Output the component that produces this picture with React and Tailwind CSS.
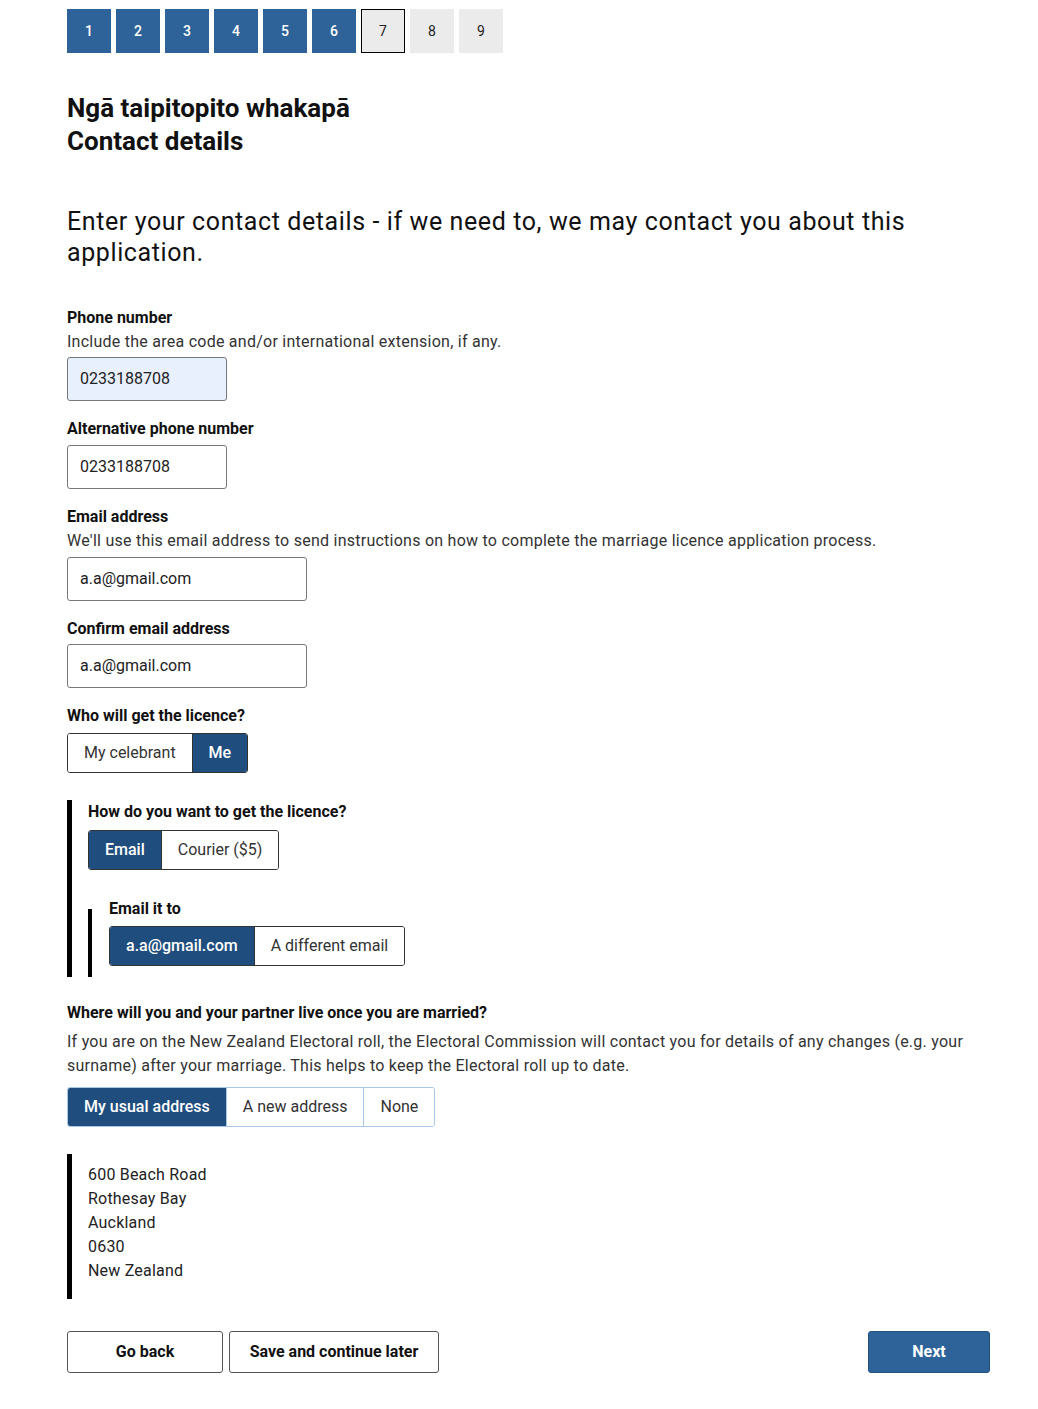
import React from 'react';
import { clsx } from 'clsx';

const font = { fontFamily: 'Roboto, "Noto Sans", sans-serif' };

function Steps() {
    const steps = [1, 2, 3, 4, 5, 6, 7, 8, 9];
    return (
        <div className="flex gap-[5px] pt-[9px]">
            {steps.map(n => (
                <div
                    key={n}
                    className={clsx(
                        'w-[44px] h-[44px] flex items-center justify-center text-[14px]',
                        n < 7 && 'bg-[#2e6399] text-white font-medium',
                        n === 7 && 'bg-[#ebebeb] border border-black text-[#222]',
                        n > 7 && 'bg-[#ebebeb] text-[#222]'
                    )}
                >
                    {n}
                </div>
            ))}
        </div>
    );
}

function Label({ children, className }) {
    return <div className={clsx('text-[16px] font-bold text-[#111] leading-[24px]', className)}>{children}</div>;
}

function Hint({ children }) {
    return <div className="text-[16px] text-[#333] leading-[24px] tracking-[0.25px]">{children}</div>;
}

function Input({ value, width, autofill }) {
    return (
        <div
            className={clsx(
                'h-[44px] border border-[#777] rounded-[3px] flex items-center px-3 text-[16px] text-[#222]',
                autofill ? 'bg-[#e8f0fe]' : 'bg-white'
            )}
            style={{ width }}
        >
            {value}
        </div>
    );
}

function Toggle({ options, selected, light }) {
    return (
        <div
            className={clsx(
                'inline-flex h-[40px] rounded-[3px] border overflow-hidden',
                light ? 'border-[#a8c6e6]' : 'border-[#333]'
            )}
        >
            {options.map((o, i) => (
                <div
                    key={o}
                    className={clsx(
                        'px-4 flex items-center text-[16px]',
                        i === selected ? 'bg-[#1f4e7e] text-white font-medium' : 'bg-white text-[#333]',
                        i > 0 && (light ? 'border-l border-[#a8c6e6]' : 'border-l border-[#333]')
                    )}
                >
                    {o}
                </div>
            ))}
        </div>
    );
}

export default function App() {
    return (
        <div className="bg-white min-h-[1409px] w-[1038px] pl-[67px] pr-[48px]" style={font}>
            <Steps />

            <h1 className="mt-[39px] text-[26px] font-bold leading-[33px] text-[#111]">
                Ngā taipitopito whakapā
                <br />
                Contact details
            </h1>

            <p className="mt-[48px] text-[25px] leading-[31px] text-[#111] tracking-[0.6px]">
                Enter your contact details - if we need to, we may contact you about this application.
            </p>

            <Label className="mt-[38px]">Phone number</Label>
            <Hint>Include the area code and/or international extension, if any.</Hint>
            <div className="mt-[3px]">
                <Input value="0233188708" width={160} autofill />
            </div>

            <Label className="mt-[16px]">Alternative phone number</Label>
            <div className="mt-[4px]">
                <Input value="0233188708" width={160} />
            </div>

            <Label className="mt-[16px]">Email address</Label>
            <Hint>We'll use this email address to send instructions on how to complete the marriage licence application process.</Hint>
            <div className="mt-[4px]">
                <Input value="a.a@gmail.com" width={240} />
            </div>

            <Label className="mt-[16px]">Confirm email address</Label>
            <div className="mt-[3px]">
                <Input value="a.a@gmail.com" width={240} />
            </div>

            <Label className="mt-[16px]">Who will get the licence?</Label>
            <div className="mt-[5px]">
                <Toggle options={['My celebrant', 'Me']} selected={1} />
            </div>

            <div className="mt-[27px] border-l-[5px] border-black pl-[16px] flex flex-col">
                <Label>How do you want to get the licence?</Label>
                <div className="mt-[6px]">
                    <Toggle options={['Email', 'Courier ($5)']} selected={0} />
                </div>
                <div className="mt-[39px] border-l-[4px] border-black pl-[17px] pb-[11px]">
                    <Label className="-mt-[12px]">Email it to</Label>
                    <div className="mt-[5px]">
                        <Toggle options={['a.a@gmail.com', 'A different email']} selected={0} />
                    </div>
                </div>
            </div>

            <Label className="mt-[24px]">Where will you and your partner live once you are married?</Label>
            <div className="mt-[5px]">
                <Hint>If you are on the New Zealand Electoral roll, the Electoral Commission will contact you for details of any changes (e.g. your surname) after your marriage. This helps to keep the Electoral roll up to date.</Hint>
            </div>
            <div className="mt-[9px]">
                <Toggle options={['My usual address', 'A new address', 'None']} selected={0} light />
            </div>

            <div className="mt-[27px] border-l-[5px] border-black pl-[16px] pt-[9px] pb-[16px] text-[16px] leading-[24px] text-[#222] tracking-[0.2px]">
                <div>600 Beach Road</div>
                <div>Rothesay Bay</div>
                <div>Auckland</div>
                <div>0630</div>
                <div>New Zealand</div>
            </div>

            <div className="mt-[32px] flex items-center">
                <button className="w-[156px] h-[42px] border border-[#555] rounded-[3px] text-[16px] font-bold text-[#111] bg-white">
                    Go back
                </button>
                <button className="ml-[6px] w-[210px] h-[42px] border border-[#555] rounded-[3px] text-[16px] font-bold text-[#111] bg-white">
                    Save and continue later
                </button>
                <div className="flex-1" />
                <button className="w-[122px] h-[42px] rounded-[3px] bg-[#2e6399] border border-[#24507d] text-[16px] font-bold text-white">
                    Next
                </button>
            </div>
        </div>
    );
}
